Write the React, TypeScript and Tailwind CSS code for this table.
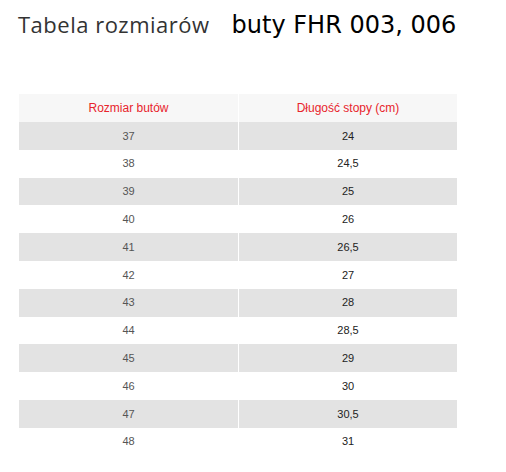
import React from 'react';

const rows: [string, string][] = [
  ['37', '24'],
  ['38', '24,5'],
  ['39', '25'],
  ['40', '26'],
  ['41', '26,5'],
  ['42', '27'],
  ['43', '28'],
  ['44', '28,5'],
  ['45', '29'],
  ['46', '30'],
  ['47', '30,5'],
  ['48', '31'],
];

const App = () => {
  return (
    <div className="w-[506px] h-[472px] bg-white overflow-hidden">
      {/* Title */}
      <div className="flex items-baseline pl-[18px] pt-[10px]">
        <h1 className="text-[22px] leading-[28px] text-[#333] font-['Open_Sans',sans-serif] tracking-[0.5px]">
          Tabela rozmiarów
        </h1>
        <span className="ml-[22px] text-[24px] leading-[28px] text-black font-['DejaVu_Sans','Verdana',sans-serif]">
          buty FHR 003, 006
        </span>
      </div>

      {/* Size table */}
      <div className="ml-[19px] mt-[55px] w-[438px] font-['Liberation_Sans','Arial',sans-serif] text-[12px]">
        <div className="grid grid-cols-[219px_1px_218px] h-[28px] bg-[#f7f7f7]">
          <div className="flex items-center justify-center text-[#e8242c]">Rozmiar butów</div>
          <div className="bg-white" />
          <div className="flex items-center justify-center text-[#e8242c]">Długość stopy (cm)</div>
        </div>
        {rows.map(([size, len], i) => (
          <div
            key={size}
            className={`grid grid-cols-[219px_1px_218px] h-[27.8px] ${i % 2 === 0 ? 'bg-[#e3e3e3]' : 'bg-white'}`}
          >
            <div className="flex items-center justify-center text-[#555] text-[11px]">{size}</div>
            <div className="bg-white" />
            <div className="flex items-center justify-center text-[#222] text-[11px]">{len}</div>
          </div>
        ))}
      </div>
    </div>
  );
};

export default App;
